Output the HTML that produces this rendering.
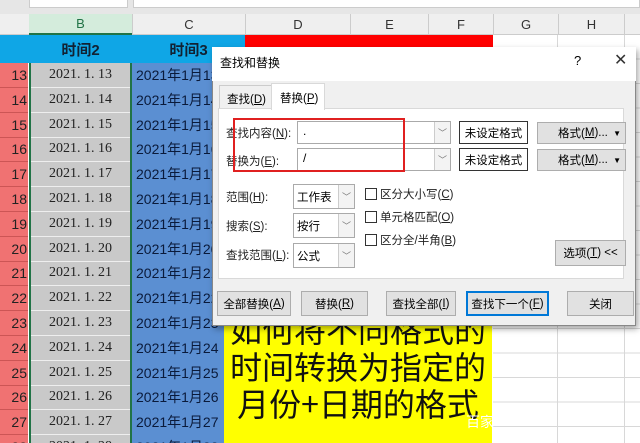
<!DOCTYPE html>
<html><head><meta charset="utf-8"><style>
*{margin:0;padding:0;box-sizing:border-box}
html,body{width:640px;height:443px;overflow:hidden}
body{position:relative;background:#fff;font-family:"Liberation Sans","Noto Sans CJK SC",sans-serif}
.a{position:absolute}
.c{position:absolute;display:flex;align-items:center;justify-content:center;white-space:nowrap}
.dlg{font-size:11.5px;color:#222}
.btn{position:absolute;display:flex;align-items:center;justify-content:center;background:#e1e1e1;border:1px solid #adadad;font-size:11.5px;white-space:nowrap}
.fld{position:absolute;background:#fff;border:1px solid #aaa;font-size:12px}
.dd{position:absolute;right:0;top:0;bottom:0;width:16px;border-left:1px solid #ccc;background:#f3f3f3;display:flex;align-items:center;justify-content:center;color:#777;font-size:9px}
.cb{position:absolute;width:12px;height:12px;border:1px solid #333;background:#fff}
u{text-decoration:underline}
</style></head><body>
<div class="a" style="left:0;top:0;width:640px;height:14px;background:#e6e6e6"></div>
<div class="a" style="left:29px;top:0;width:99px;height:8px;background:#fff;border:1px solid #ccc;border-top:none"></div>
<div class="a" style="left:133px;top:0;width:507px;height:8px;background:#fff;border:1px solid #ccc;border-top:none"></div>
<div class="a" style="left:0;top:14px;width:640px;height:21px;background:#efefef;border-bottom:1px solid #ccc"></div>
<div class="c" style="left:29px;top:14px;width:103px;height:21px;background:#d4ecdc;color:#217346;font-size:13px;border-bottom:2px solid #217346">B</div>
<div class="c" style="left:132px;top:14px;width:113px;height:21px;font-size:13px;color:#333;border-left:1px solid #ccc">C</div>
<div class="c" style="left:245px;top:14px;width:105px;height:21px;font-size:13px;color:#333;border-left:1px solid #ccc">D</div>
<div class="c" style="left:350px;top:14px;width:78px;height:21px;font-size:13px;color:#333;border-left:1px solid #ccc">E</div>
<div class="c" style="left:428px;top:14px;width:65px;height:21px;font-size:13px;color:#333;border-left:1px solid #ccc">F</div>
<div class="c" style="left:493px;top:14px;width:65px;height:21px;font-size:13px;color:#333;border-left:1px solid #ccc">G</div>
<div class="c" style="left:558px;top:14px;width:67px;height:21px;font-size:13px;color:#333;border-left:1px solid #ccc;border-right:1px solid #ccc">H</div>
<div class="a" style="left:0;top:35px;width:29px;height:28px;background:#0fa6e6"></div>
<div class="c" style="left:29px;top:35px;width:103px;height:28px;background:#0fa6e6;font-weight:bold;font-size:15px;color:#123">时间2</div>
<div class="c" style="left:132px;top:35px;width:113px;height:28px;background:#0fa6e6;font-weight:bold;font-size:15px;color:#123">时间3</div>
<div class="a" style="left:245px;top:35px;width:248px;height:28px;background:#f00"></div>
<div class="a" style="left:0;top:63px;width:28px;height:380px;background:#f07272"></div>
<div class="a" style="left:29px;top:63px;width:103px;height:380px;background:#c9c9c9;border-left:2px solid #217346;border-right:2px solid #217346"></div>
<div class="a" style="left:132px;top:63px;width:92px;height:380px;background:#5b8fd2"></div>
<div id="rows"></div>
<div class="a" style="left:493px;top:35px;width:147px;height:408px;background:
repeating-linear-gradient(to bottom,transparent 0,transparent 23.5px,#d8d8d8 23.5px,#d8d8d8 24.5px)"></div>
<div class="a" style="left:557px;top:35px;width:1px;height:408px;background:#d8d8d8"></div>
<div class="a" style="left:624px;top:35px;width:1px;height:408px;background:#d8d8d8"></div>
<div class="a" style="left:224px;top:280px;width:268px;height:163px;background:#ff0"></div>
<div class="a" style="left:224px;top:311px;width:268px;text-align:center;font-size:32px;line-height:37px;color:#111;white-space:nowrap;font-family:'Noto Sans CJK SC',sans-serif">如何将不同格式的<br>时间转换为指定的<br>月份+日期的格式</div>
<div class="a" style="left:466px;top:412px;font-size:14px;color:#fff">百家</div>
<div class="a dlg" style="left:212px;top:47px;width:424px;height:279px;background:#f0f0f0;border:1px solid #888;box-shadow:2px 3px 6px rgba(0,0,0,.35)"></div>
<div class="a dlg" style="left:212px;top:47px;width:424px;height:34px;background:#fff"></div>
<div class="a" style="left:220px;top:54px;font-size:12px">查找和替换</div>
<div class="a" style="left:574px;top:53px;font-size:13px">?</div>
<div class="a" style="left:614px;top:50px;font-size:16px;color:#333">✕</div>
<div class="a" style="left:219px;top:85px;width:53px;height:24px;border:1px solid #ccc;border-bottom:none;font-size:11.5px;padding:5px 0 0 7px">查找(<u>D</u>)</div>
<div class="a" style="left:218px;top:108px;width:406px;height:171px;background:#fff;border:1px solid #d9d9d9"></div>
<div class="a" style="left:271px;top:83px;width:54px;height:27px;background:#fff;border:1px solid #d9d9d9;border-bottom:none;font-size:11.5px;padding:6px 0 0 8px">替换(<u>P</u>)</div>
<div class="a dlg" style="left:226px;top:125px">查找内容(<u>N</u>):</div>
<div class="a dlg" style="left:226px;top:153px">替换为(<u>E</u>):</div>
<div class="fld" style="left:297px;top:121px;width:154px;height:23px;padding:2px 5px">.<div class="dd">﹀</div></div>
<div class="fld" style="left:297px;top:148px;width:154px;height:23px;padding:2px 5px">/<div class="dd">﹀</div></div>
<div class="a" style="left:233px;top:118px;width:172px;height:54px;border:2px solid #e02020"></div>
<div class="btn" style="left:459px;top:121px;width:69px;height:23px;border:1px solid #333;background:#fff">未设定格式</div>
<div class="btn" style="left:459px;top:148px;width:69px;height:23px;border:1px solid #333;background:#fff">未设定格式</div>
<div class="btn" style="left:537px;top:122px;width:89px;height:22px;justify-content:flex-start;padding-left:20px">格式(<u>M</u>)...<span style="position:absolute;right:4px;font-size:8px">▼</span></div>
<div class="btn" style="left:537px;top:149px;width:89px;height:22px;justify-content:flex-start;padding-left:20px">格式(<u>M</u>)...<span style="position:absolute;right:4px;font-size:8px">▼</span></div>
<div class="a dlg" style="left:226px;top:189px">范围(<u>H</u>):</div>
<div class="a dlg" style="left:226px;top:218px">搜索(<u>S</u>):</div>
<div class="a dlg" style="left:226px;top:247px">查找范围(<u>L</u>):</div>
<div class="fld" style="left:293px;top:184px;width:62px;height:25px;padding:4px 3px;font-size:11.5px">工作表<div class="dd">﹀</div></div>
<div class="fld" style="left:293px;top:213px;width:62px;height:25px;padding:4px 3px;font-size:11.5px">按行<div class="dd">﹀</div></div>
<div class="fld" style="left:293px;top:243px;width:62px;height:25px;padding:4px 3px;font-size:11.5px">公式<div class="dd">﹀</div></div>
<div class="cb" style="left:365px;top:188px"></div><div class="a dlg" style="left:380px;top:186px">区分大小写(<u>C</u>)</div>
<div class="cb" style="left:365px;top:211px"></div><div class="a dlg" style="left:380px;top:209px">单元格匹配(<u>O</u>)</div>
<div class="cb" style="left:365px;top:234px"></div><div class="a dlg" style="left:380px;top:232px">区分全/半角(<u>B</u>)</div>
<div class="btn" style="left:555px;top:240px;width:71px;height:26px">选项(<u>T</u>) &lt;&lt;</div>
<div class="btn" style="left:217px;top:291px;width:74px;height:25px">全部替换(<u>A</u>)</div>
<div class="btn" style="left:301px;top:291px;width:67px;height:25px">替换(<u>R</u>)</div>
<div class="btn" style="left:386px;top:291px;width:70px;height:25px">查找全部(<u>I</u>)</div>
<div class="btn" style="left:466px;top:291px;width:83px;height:25px;border:2px solid #0078d7">查找下一个(<u>F</u>)</div>
<div class="btn" style="left:567px;top:291px;width:67px;height:25px">关闭</div>
<script>
var h='';for(var i=0;i<16;i++){var y=63+i*24.8,n=13+i;
h+='<div class="a" style="left:0;top:'+y+'px;width:28px;height:25px;border-bottom:1px solid #c55;font-size:14px;line-height:25px;color:#222;text-align:right;padding-right:1px;overflow:hidden">'+n+'</div>';
h+='<div class="c" style="left:31px;top:'+y+'px;width:99px;height:25px;border-bottom:1px solid #eee;font-size:14px;color:#222;font-family:\'Liberation Serif\',serif">2021. 1. '+n+'</div>';
h+='<div class="a" style="left:136px;top:'+y+'px;width:88px;height:25px;font-size:14px;line-height:25px;color:#0a1a3a;white-space:nowrap;overflow:hidden">2021年1月'+n+'</div>';}
document.getElementById('rows').outerHTML=h;
</script>
</body></html>
